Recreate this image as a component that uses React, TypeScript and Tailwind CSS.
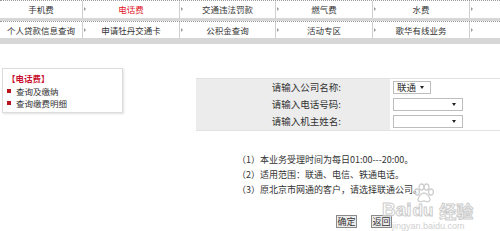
const row1 = ["手机费", "电话费", "交通违法罚款", "燃气费", "水费", ""];
const row2 = ["个人贷款信息查询", "申请牡丹交通卡", "公积金查询", "活动专区", "歌华有线业务", ""];
const widths = ["w-[83px]", "w-[97px]", "w-[96px]", "w-[97px]", "w-[97px]", "flex-1"];

function NavRow({ items, active, h }: { items: string[]; active?: string; h: string }) {
  return (
    <div className={`flex ${h} border-t border-dotted border-[#9a9a9a] bg-white text-[8.5px]`}>
      {items.map((label, i) => (
        <div
          key={i}
          className={`${widths[i]} relative flex shrink-0 items-center justify-center border-r border-[#cfcfcf] last:border-r-0 ${
            label === active ? "text-[#e0141e]" : "text-[#333]"
          }`}
        >
          {i > 0 && (
            <span className="absolute left-[1px] top-[6px] h-0 w-0 border-y-[2px] border-l-[2px] border-y-transparent border-l-[#9a9a9a]" />
          )}
          {label}
        </div>
      ))}
    </div>
  );
}

function FakeSelect({ value, w }: { value?: string; w: string }) {
  return (
    <div className={`${w} flex h-[13px] items-center justify-between border border-[#bdbdbd] bg-white pl-[3px] pr-[6px]`}>
      <span>{value ?? ""}</span>
      <span className="h-0 w-0 border-x-[2px] border-t-[3px] border-x-transparent border-t-[#222]" />
    </div>
  );
}

function Paw() {
  return (
    <svg width="22" height="20" viewBox="0 0 22 20" fill="none" stroke="#cfcfcf" strokeWidth="1.3">
      <ellipse cx="4" cy="9" rx="2.4" ry="3" />
      <ellipse cx="8.5" cy="4" rx="2.4" ry="3" />
      <ellipse cx="13.5" cy="4" rx="2.4" ry="3" />
      <ellipse cx="18" cy="9" rx="2.4" ry="3" />
      <path d="M11 10c-3 0-6 4-6 6.5 0 2 2 2.5 3.5 2 1-.3 1.7-.6 2.5-.6s1.5.3 2.5.6c1.5.5 3.5 0 3.5-2 0-2.5-3-6.5-6-6.5z" />
    </svg>
  );
}

export default function App() {
  const fields = [
    { label: "请输入公司名称:", value: "联通", w: "w-[38px]" },
    { label: "请输入电话号码:", w: "w-[70px]" },
    { label: "请输入机主姓名:", w: "w-[70px]" },
  ];

  return (
    <div
      className="relative h-[231px] w-[500px] overflow-hidden bg-white text-[9.5px] leading-none text-[#333]"
      style={{ fontFamily: '"Noto Sans CJK SC", "Liberation Sans", sans-serif' }}
    >
      <NavRow items={row1} active="电话费" h="h-[18px]" />
      <div className="h-[3px] bg-[#d7d7d7]" />
      <NavRow items={row2} h="h-[17px]" />
      <div className="h-[6px] bg-[#d7d7d7]" />

      <div className="flex">
        <div className="ml-[2px] mt-[24px] h-[45px] w-[121px] border border-[#dcdcdc] px-[4px] pt-[5px] text-[8.5px] shadow-[1px_1px_2px_rgba(0,0,0,0.12)]">
          <div className="font-bold text-[#c8102e]">【电话费】</div>
          <div className="mt-[4px] flex items-center gap-[5px]">
            <span className="h-[4px] w-[4px] bg-[#b8141e]" />
            查询及缴纳
          </div>
          <div className="mt-[4px] flex items-center gap-[5px]">
            <span className="h-[4px] w-[4px] bg-[#b8141e]" />
            查询缴费明细
          </div>
        </div>

        <div className="ml-[73px] mt-[34px] flex-1">
          <div className="border-y border-[#e2e2e2]">
            {fields.map((f) => (
              <div key={f.label} className="flex h-[17px]">
                <div className="flex w-[194px] items-center justify-end bg-[#ececec] pr-[49px]">{f.label}</div>
                <div className="flex flex-1 items-center pl-[3px]">
                  <FakeSelect value={f.value} w={f.w} />
                </div>
              </div>
            ))}
          </div>

          <div className="ml-[41px] mt-[24px] space-y-[6px] text-[9px] text-[#333]">
            <div>（1）本业务受理时间为每日01:00---20:00。</div>
            <div>（2）适用范围：联通、电信、铁通电话。</div>
            <div>（3）原北京市网通的客户，请选择联通公司。</div>
          </div>

          <div className="ml-[140px] mt-[21px] flex gap-[14px]">
            <button className="h-[13px] w-[21px] border border-[#8a8a8a] bg-[#ececec] text-[9px] leading-none">确定</button>
            <button className="h-[13px] w-[21px] border border-[#8a8a8a] bg-[#ececec] text-[9px] leading-none">返回</button>
          </div>
        </div>
      </div>

      <div className="pointer-events-none absolute left-[382px] top-[191px] text-white/40">
        <div className="flex items-end text-[19px] font-bold leading-none [-webkit-text-stroke:1px_#cdcdcd]" style={{ fontFamily: '"Liberation Sans", sans-serif' }}>
          <span>Bai</span>
          <span className="relative ml-[1px] pt-[9px]">
            <span className="absolute left-[0px] top-[-8px]">
              <Paw />
            </span>
            <span className="text-[17px]">du</span>
          </span>
          <span className="ml-[6px] text-[17px]" style={{ fontFamily: '"Noto Sans CJK SC", sans-serif' }}>经验</span>
        </div>
        <div className="mt-[3px] pl-[10px] text-[9px] leading-none text-[#d0d0d0]" style={{ fontFamily: '"Liberation Sans", sans-serif' }}>
          jingyan.baidu.com
        </div>
      </div>
    </div>
  );
}
